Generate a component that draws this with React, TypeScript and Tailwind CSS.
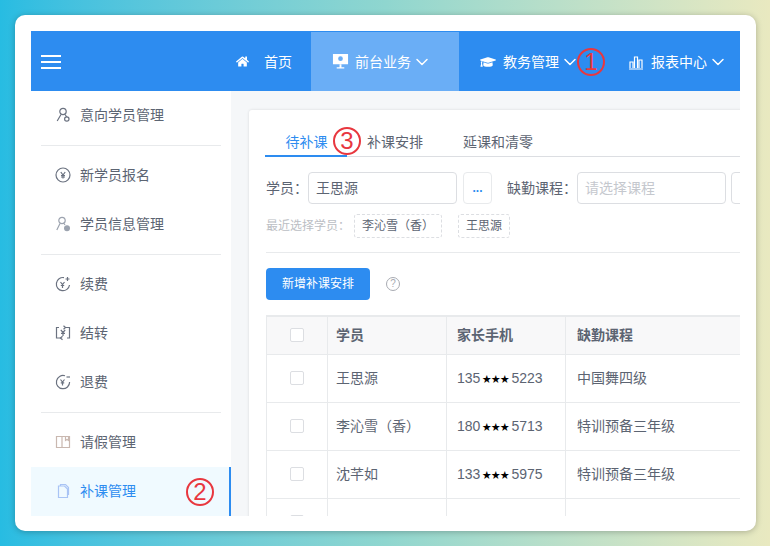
import { ChevronDown } from 'lucide-react';
import { FaGraduationCap, FaHome } from 'react-icons/fa';
import type { ReactNode } from 'react';

const font = { fontFamily: '"Liberation Sans", "Noto Sans CJK SC", sans-serif' };

function Icon({ children, className = 'text-[#6b7280]' }: { children: ReactNode; className?: string }) {
  return (
    <svg viewBox="0 0 16 16" fill="none" stroke="currentColor" strokeWidth="1.2" className={`h-4 w-4 shrink-0 ${className}`}>
      {children}
    </svg>
  );
}

const PersonIcon = () => (
  <Icon>
    <circle cx="8" cy="4.5" r="3.2" />
    <path d="M6 7.5 2.2 14M10 7.5l1.8 2.5" />
    <circle cx="11.8" cy="12" r="2.2" />
  </Icon>
);
const YenCircle = () => (
  <Icon>
    <circle cx="8" cy="8" r="7" />
    <path d="M5.8 5 8 8l2.2-3M8 8v3.5M6 8.5h4M6 10h4" />
  </Icon>
);
const PersonGear = () => (
  <Icon className="text-[#9ca3af]">
    <circle cx="7" cy="4.5" r="3.2" />
    <path d="M5 7.5 1.8 14M9 7.5l1 1.5" />
    <circle cx="12" cy="12.2" r="2.4" fill="currentColor" />
  </Icon>
);
const RenewIcon = () => (
  <Icon>
    <path d="M9 1.6A6.6 6.6 0 1 0 14.5 9" />
    <path d="M12.5 1v4M10.500 3h4" />
    <path d="M5.500 6 7.500 8.500 9.500 6M7.500 8.500V12M5.800 9.500h3.400" />
  </Icon>
);
const TransferIcon = () => (
  <Icon>
    <path d="M4 2.500H1.500v10.500H6M10 2.500h4.500V13H12" />
    <path d="m8.500 .8 2 1.700-2 1.700M7.500 11.300 5.500 13l2 1.700" />
    <path d="M5.800 4.800 8 7.500l2.200-2.700M8 7.500V11M6 8.300h4" />
  </Icon>
);
const RefundIcon = () => (
  <Icon>
    <path d="M10 1.800A6.600 6.600 0 1 0 14.600 8" />
    <path d="M11.500 3h3.500" />
    <path d="M5.500 5.500 7.500 8l2-2.500M7.500 8v3.500M5.800 8.800h3.400" />
  </Icon>
);
const LeaveIcon = () => (
  <Icon className="text-[#c9b8b0]">
    <path d="M1.500 2.500h13v11h-13zM7 2.500v11M10.500 2.500v4l1.500-1 1.500 1v-4" />
  </Icon>
);
const MakeupIcon = () => (
  <Icon className="text-[#a9c4f5]">
    <path d="M3.500 3h6l3 3v8.500h-9zM5.500 3V1.500h5l3 3V12" />
  </Icon>
);

function MenuRow({ icon, label, active }: { icon: ReactNode; label: string; active?: boolean }) {
  return (
    <div
      className={`flex h-[49px] items-center gap-[9px] pb-0.5 pl-6 text-sm ${
        active ? 'border-r-2 border-[#2d8cf0] bg-[#f0faff] text-[#2d8cf0]' : 'text-[#5c6472]'
      }`}
    >
      {icon}
      <span>{label}</span>
    </div>
  );
}

const MenuDivider = () => <div className="mx-2.5 my-[5px] h-px bg-[#e8eaec]" />;

function NavItem({ icon, label, active }: { icon: ReactNode; label: string; active?: boolean }) {
  return (
    <div className={`flex h-full w-[148px] shrink-0 items-center pl-[21px] text-sm text-white ${active ? 'bg-[#6aaef6]' : ''}`}>
      <span className="flex w-[23px] shrink-0 items-center">{icon}</span>
      <span>{label}</span>
      <ChevronDown className="ml-px h-5 w-5" strokeWidth={1.8} />
    </div>
  );
}

function Circled({ n, className }: { n: number; className: string }) {
  return (
    <div
      className={`absolute flex h-7 w-7 items-center justify-center rounded-full border-2 border-[#e8373f] text-2xl leading-none text-[#e8373f] ${className}`}
    >
      {n}
    </div>
  );
}

function Checkbox() {
  return <div className="mx-auto h-[14px] w-[14px] rounded-[2px] border border-[#dcdee2] bg-white" />;
}

const rows = [
  { name: '王思源', pre: '135', post: '5223', course: '中国舞四级' },
  { name: '李沁雪（香）', pre: '180', post: '5713', course: '特训预备三年级' },
  { name: '沈芊如', pre: '133', post: '5975', course: '特训预备三年级' },
  { name: '', pre: '', post: '', course: '' },
];

export default function App() {
  return (
    <div
      style={font}
      className="relative h-[546px] w-[770px] overflow-hidden bg-gradient-to-r from-[#27bce2] via-[#8fd6cf] to-[#e9e9c0] py-[15px] pl-[15px] pr-[14px]"
    >
      <div className="h-[516px] rounded-[10px] bg-white p-4 shadow-[0_1px_6px_rgba(0,0,0,0.25)]">
        <div className="flex h-[485px] flex-col overflow-hidden">
          {/* Top bar */}
          <header className="flex h-[60px] shrink-0 items-center bg-[#2d8cf0] pt-px">
            <div className="flex w-[185px] shrink-0 flex-col gap-1 pl-2.5">
              <span className="h-0.5 w-5 bg-white" />
              <span className="h-0.5 w-5 bg-white" />
              <span className="h-0.5 w-5 bg-white" />
            </div>
            <div className="flex h-full w-[95px] shrink-0 items-center pl-5 text-sm text-white">
              <FaHome className="mr-[15px] h-[13px] w-[13px]" />
              <span>首页</span>
            </div>
            <NavItem
              active
              label="前台业务"
              icon={
                <svg viewBox="0 0 18 18" className="h-[17px] w-[17px]" fill="white">
                  <path fillRule="evenodd" d="M1 1h16v11H1zM9 3.500a2.500 2.500 0 1 0 0 5 2.500 2.500 0 0 0 0-5z" />
                  <path d="M8 12h2v3h3v1.500H5V15h3z" />
                </svg>
              }
            />
            <NavItem label="教务管理" icon={<FaGraduationCap className="h-4 w-4" />} />
            <NavItem
              label="报表中心"
              icon={
                <svg viewBox="0 0 16 16" className="h-4 w-4" fill="none" stroke="white" strokeWidth="1.200">
                  <path d="M1 15h14M2 14V8h3v6M6.500 14V3h3v11M11 14V6h3v8" />
                </svg>
              }
            />
          </header>

          <div className="flex min-h-0 flex-1">
            {/* Side menu */}
            <aside className="w-[200px] shrink-0 bg-white">
              <MenuRow icon={<PersonIcon />} label="意向学员管理" />
              <MenuDivider />
              <MenuRow icon={<YenCircle />} label="新学员报名" />
              <MenuRow icon={<PersonGear />} label="学员信息管理" />
              <MenuDivider />
              <MenuRow icon={<RenewIcon />} label="续费" />
              <MenuRow icon={<TransferIcon />} label="结转" />
              <MenuRow icon={<RefundIcon />} label="退费" />
              <MenuDivider />
              <MenuRow icon={<LeaveIcon />} label="请假管理" />
              <MenuRow active icon={<MakeupIcon />} label="补课管理" />
            </aside>

            {/* Content */}
            <main className="min-w-0 flex-1 overflow-hidden bg-[#f5f7f9] pl-[18px] pt-[19px]">
              <div className="w-[760px] rounded-[3px] bg-white pl-[17px] pt-5 shadow-[0_0_3px_rgba(0,0,0,0.12)]">
                <div className="-ml-px flex h-[27px] border-b border-[#dcdee2] text-sm text-[#5c6472]">
                  <div className="h-[27px] w-[82px] border-b-2 border-[#2d8cf0] pl-px text-center leading-[25px] text-[#2d8cf0]">待补课</div>
                  <div className="ml-5 leading-[25px]">补课安排</div>
                  <div className="ml-10 leading-[25px]">延课和清零</div>
                </div>

                <div className="mt-[15px] flex h-[32px] items-center text-sm text-[#5c6472]">
                  <span className="w-[42px]">学员：</span>
                  <div className="flex h-[32px] w-[149px] items-center rounded border border-[#dcdee2] px-[7px]">王思源</div>
                  <div className="ml-[6px] flex h-[32px] w-[29px] items-center justify-center rounded border border-[#e8eaec] text-xs font-bold text-[#2d8cf0]">...</div>
                  <span className="ml-[15px] w-[70px] whitespace-nowrap">缺勤课程：</span>
                  <div className="flex h-[32px] w-[149px] items-center rounded border border-[#dcdee2] px-[7px] text-[#c5c8ce]">请选择课程</div>
                  <div className="ml-[5px] h-[32px] w-[100px] rounded border border-[#dcdee2]" />
                </div>

                <div className="mt-[10px] flex h-[24px] items-center text-xs text-[#5c6472]">
                  <span className="w-[88px] text-[#bbbec4]">最近选择学员：</span>
                  <span className="flex h-[24px] w-[88px] items-center justify-center rounded-[3px] border border-dashed border-[#dcdee2]">李沁雪（香）</span>
                  <span className="ml-4 flex h-[24px] w-[52px] items-center justify-center rounded-[3px] border border-dashed border-[#dcdee2]">王思源</span>
                </div>

                <div className="mt-[14px] h-px bg-[#e8eaec]" />

                <div className="mt-[15px] flex items-center">
                  <button className="h-[32px] w-[104px] rounded bg-[#2d8cf0] text-xs text-white">新增补课安排</button>
                  <span className="ml-[16px] flex h-[14px] w-[14px] items-center justify-center rounded-full border border-[#a8abb2] text-[10px] leading-none text-[#a8abb2]">?</span>
                </div>

                <table className="mt-[15px] w-[740px] table-fixed border-collapse border-t-2 border-[#e8eaec] text-sm text-[#5c6472]">
                  <colgroup>
                    <col className="w-[61px]" />
                    <col className="w-[119px]" />
                    <col className="w-[119px]" />
                    <col />
                  </colgroup>
                  <thead>
                    <tr className="h-[38px] bg-[#f8f8f9] text-left font-bold">
                      <th className="border border-[#e8eaec]"><Checkbox /></th>
                      <th className="border border-[#e8eaec] pl-2">学员</th>
                      <th className="border border-[#e8eaec] pl-[10px]">家长手机</th>
                      <th className="border border-[#e8eaec] pl-[11px]">缺勤课程</th>
                    </tr>
                  </thead>
                  <tbody>
                    {rows.map((r, i) => (
                      <tr key={i} className="h-[48px]">
                        <td className="border border-[#e8eaec]"><Checkbox /></td>
                        <td className="border border-[#e8eaec] pl-2">{r.name}</td>
                        <td className="border border-[#e8eaec] pl-[10px]">
                          {r.pre && (
                            <>
                              {r.pre}
                              <span className="mx-[2px] align-[1px] text-[9px] text-black">★★★</span>
                              {r.post}
                            </>
                          )}
                        </td>
                        <td className="border border-[#e8eaec] pl-[11px]">{r.course}</td>
                      </tr>
                    ))}
                  </tbody>
                </table>
              </div>
            </main>
          </div>
        </div>
      </div>

      {/* Red annotation marks */}
      <Circled n={1} className="left-[577px] top-[48px]" />
      <Circled n={2} className="left-[186px] top-[478px]" />
      <Circled n={3} className="left-[333px] top-[127px]" />
    </div>
  );
}
